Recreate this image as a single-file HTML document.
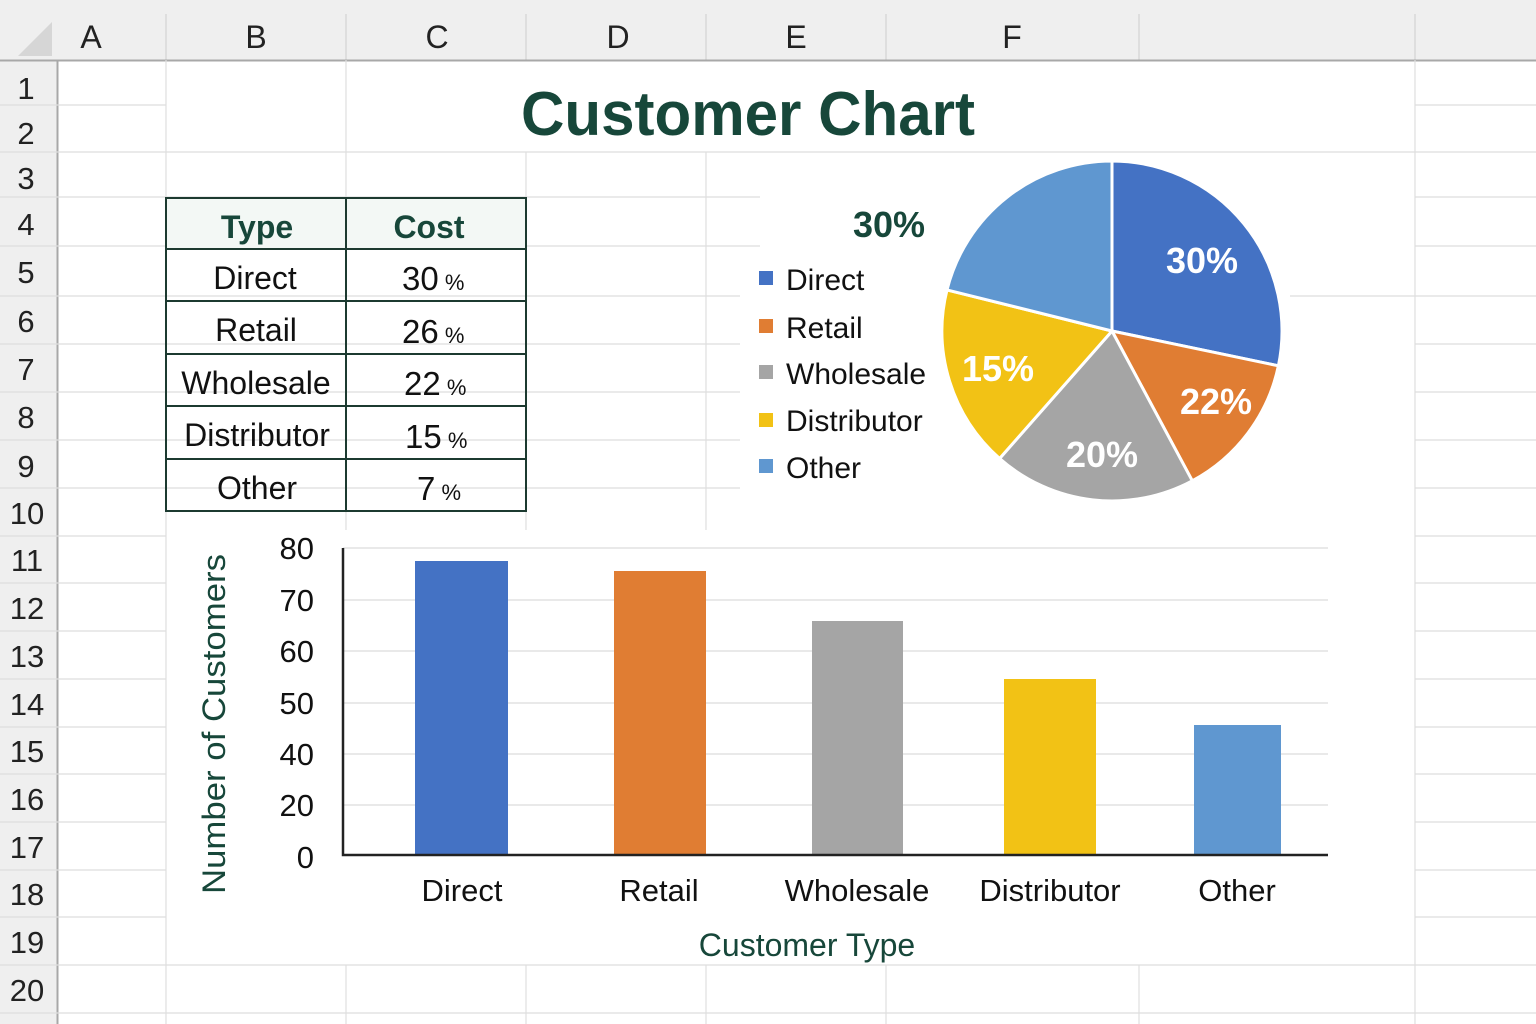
<!DOCTYPE html>
<html><head><meta charset="utf-8"><style>
html,body{margin:0;padding:0;background:#fff;}
svg{display:block;font-family:"Liberation Sans",sans-serif;}
</style></head><body>
<svg width="1536" height="1024" viewBox="0 0 1536 1024" xmlns="http://www.w3.org/2000/svg">
<rect width="1536" height="1024" fill="#fff"/>
<!-- headers -->
<rect x="0" y="0" width="1536" height="60" fill="#efefef"/>
<rect x="0" y="0" width="57" height="1024" fill="#efefef"/>
<polygon points="52,22 52,56 18,56" fill="#d6d6d6"/>
<g stroke="#d4d4d4" stroke-width="1.3">
<line x1="166" y1="14" x2="166" y2="60"/><line x1="346" y1="14" x2="346" y2="60"/><line x1="526" y1="14" x2="526" y2="60"/><line x1="706" y1="14" x2="706" y2="60"/><line x1="886" y1="14" x2="886" y2="60"/><line x1="1139" y1="14" x2="1139" y2="60"/><line x1="1415" y1="14" x2="1415" y2="60"/>
</g>
<line x1="0" y1="60.5" x2="1536" y2="60.5" stroke="#a8a8a8" stroke-width="2"/>
<line x1="57.5" y1="60" x2="57.5" y2="1024" stroke="#a8a8a8" stroke-width="2"/>
<g font-size="32" fill="#222" text-anchor="middle">
<text x="91" y="48">A</text><text x="256" y="48">B</text><text x="437" y="48">C</text><text x="618" y="48">D</text><text x="796" y="48">E</text><text x="1012" y="48">F</text>
</g>
<!-- grid -->
<g stroke="#dedede" stroke-width="1.2">
<line x1="166" y1="60" x2="166" y2="1024"/><line x1="346" y1="60" x2="346" y2="530"/><line x1="526" y1="152" x2="526" y2="530"/><line x1="706" y1="152" x2="706" y2="530"/><line x1="1415" y1="60" x2="1415" y2="1024"/>
<line x1="346" y1="965" x2="346" y2="1024"/><line x1="526" y1="965" x2="526" y2="1024"/><line x1="706" y1="965" x2="706" y2="1024"/><line x1="886" y1="965" x2="886" y2="1024"/><line x1="1139" y1="965" x2="1139" y2="1024"/>
</g>
<g stroke="#dedede" stroke-width="1.2">
<line x1="0" y1="105" x2="166" y2="105"/><line x1="1415" y1="105" x2="1536" y2="105"/>
<line x1="0" y1="152" x2="1536" y2="152"/>
<line x1="0" y1="197" x2="760" y2="197"/><line x1="1415" y1="197" x2="1536" y2="197"/>
<line x1="0" y1="246" x2="760" y2="246"/><line x1="1415" y1="246" x2="1536" y2="246"/>
<line x1="0" y1="296" x2="740" y2="296"/><line x1="1290" y1="296" x2="1536" y2="296"/>
<line x1="0" y1="344" x2="740" y2="344"/><line x1="1415" y1="344" x2="1536" y2="344"/>
<line x1="0" y1="392" x2="740" y2="392"/><line x1="1415" y1="392" x2="1536" y2="392"/>
<line x1="0" y1="440" x2="740" y2="440"/><line x1="1415" y1="440" x2="1536" y2="440"/>
<line x1="0" y1="488" x2="740" y2="488"/><line x1="1415" y1="488" x2="1536" y2="488"/>
<line x1="0" y1="536" x2="166" y2="536"/><line x1="1415" y1="536" x2="1536" y2="536"/>
<line x1="0" y1="583" x2="166" y2="583"/><line x1="1415" y1="583" x2="1536" y2="583"/>
<line x1="0" y1="631" x2="166" y2="631"/><line x1="1415" y1="631" x2="1536" y2="631"/>
<line x1="0" y1="679" x2="166" y2="679"/><line x1="1415" y1="679" x2="1536" y2="679"/>
<line x1="0" y1="727" x2="166" y2="727"/><line x1="1415" y1="727" x2="1536" y2="727"/>
<line x1="0" y1="774" x2="166" y2="774"/><line x1="1415" y1="774" x2="1536" y2="774"/>
<line x1="0" y1="822" x2="166" y2="822"/><line x1="1415" y1="822" x2="1536" y2="822"/>
<line x1="0" y1="870" x2="166" y2="870"/><line x1="1415" y1="870" x2="1536" y2="870"/>
<line x1="0" y1="917" x2="166" y2="917"/><line x1="1415" y1="917" x2="1536" y2="917"/>
<line x1="0" y1="965" x2="1536" y2="965"/>
<line x1="0" y1="1013" x2="1536" y2="1013"/>
</g>
<g font-size="31" fill="#222" text-anchor="middle">
<text x="26" y="99">1</text><text x="26" y="144">2</text><text x="26" y="189">3</text><text x="26" y="235">4</text><text x="26" y="283">5</text><text x="26" y="332">6</text><text x="26" y="380">7</text><text x="26" y="428">8</text><text x="26" y="477">9</text><text x="27" y="524">10</text><text x="27" y="571">11</text><text x="27" y="619">12</text><text x="27" y="667">13</text><text x="27" y="715">14</text><text x="27" y="762">15</text><text x="27" y="810">16</text><text x="27" y="858">17</text><text x="27" y="905">18</text><text x="27" y="953">19</text><text x="27" y="1001">20</text>
</g>
<!-- title -->
<text x="748" y="135" font-size="62" font-weight="bold" fill="#17473a" text-anchor="middle" textLength="454" lengthAdjust="spacingAndGlyphs">Customer Chart</text>
<!-- table -->
<rect x="166" y="198" width="360" height="51" fill="#f3f8f5"/>
<g stroke="#1c3a30" stroke-width="2" fill="none">
<rect x="166" y="198" width="360" height="313"/>
<line x1="346" y1="198" x2="346" y2="511"/>
<line x1="166" y1="249" x2="526" y2="249"/><line x1="166" y1="301" x2="526" y2="301"/><line x1="166" y1="354" x2="526" y2="354"/><line x1="166" y1="406" x2="526" y2="406"/><line x1="166" y1="459" x2="526" y2="459"/>
</g>
<g font-size="32" font-weight="bold" fill="#17473a" text-anchor="middle">
<text x="257" y="238">Type</text><text x="429" y="238">Cost</text>
</g>
<g font-size="32" fill="#111" text-anchor="middle">
<text x="255" y="289">Direct</text><text x="256" y="341">Retail</text><text x="256" y="394">Wholesale</text><text x="257" y="446">Distributor</text><text x="257" y="499">Other</text>
</g>
<g font-size="33" fill="#111">
<text x="402" y="290">30<tspan font-size="22"> %</tspan></text>
<text x="402" y="343">26<tspan font-size="22"> %</tspan></text>
<text x="404" y="395">22<tspan font-size="22"> %</tspan></text>
<text x="405" y="448">15<tspan font-size="22"> %</tspan></text>
<text x="417" y="500">7<tspan font-size="22"> %</tspan></text>
</g>
<!-- pie -->
<g stroke="#fff" stroke-width="3" stroke-linejoin="round">
<path d="M1112,331 L1112,161 A170,170 0 0 1 1278.4,365.8 Z" fill="#4472c4"/>
<path d="M1112,331 L1278.4,365.8 A170,170 0 0 1 1192.3,480.8 Z" fill="#e07d33"/>
<path d="M1112,331 L1192.3,480.8 A170,170 0 0 1 999.6,458.5 Z" fill="#a5a5a5"/>
<path d="M1112,331 L999.6,458.5 A170,170 0 0 1 947,289.9 Z" fill="#f2c215"/>
<path d="M1112,331 L947,289.9 A170,170 0 0 1 1112,161 Z" fill="#5f97d0"/>
</g>
<g font-size="36" font-weight="bold" fill="#fff" text-anchor="middle">
<text x="1202" y="273">30%</text><text x="1216" y="414">22%</text><text x="1102" y="467">20%</text><text x="998" y="381">15%</text>
</g>
<text x="889" y="237" font-size="36" font-weight="bold" fill="#17473a" text-anchor="middle">30%</text>
<rect x="759" y="271" width="14" height="14" fill="#4472c4"/>
<rect x="759" y="319" width="14" height="14" fill="#e07d33"/>
<rect x="759" y="365" width="14" height="14" fill="#a5a5a5"/>
<rect x="759" y="413" width="14" height="14" fill="#f2c215"/>
<rect x="759" y="459" width="14" height="14" fill="#5f97d0"/>
<g font-size="30" fill="#111">
<text x="786" y="290">Direct</text><text x="786" y="338">Retail</text><text x="786" y="384">Wholesale</text><text x="786" y="431">Distributor</text><text x="786" y="478">Other</text>
</g>
<!-- bar chart -->
<g stroke="#dcdcdc" stroke-width="1.3">
<line x1="343" y1="548" x2="1328" y2="548"/><line x1="343" y1="600" x2="1328" y2="600"/><line x1="343" y1="651" x2="1328" y2="651"/><line x1="343" y1="703" x2="1328" y2="703"/><line x1="343" y1="754" x2="1328" y2="754"/><line x1="343" y1="805" x2="1328" y2="805"/>
</g>
<rect x="415" y="561" width="93" height="294" fill="#4472c4"/>
<rect x="614" y="571" width="92" height="284" fill="#e07d33"/>
<rect x="812" y="621" width="91" height="234" fill="#a5a5a5"/>
<rect x="1004" y="679" width="92" height="176" fill="#f2c215"/>
<rect x="1194" y="725" width="87" height="130" fill="#5f97d0"/>
<path d="M343,548 L343,855 L1328,855" stroke="#222" stroke-width="2.5" fill="none"/>
<g font-size="31" fill="#111" text-anchor="end">
<text x="314" y="559">80</text><text x="314" y="611">70</text><text x="314" y="662">60</text><text x="314" y="714">50</text><text x="314" y="765">40</text><text x="314" y="816">20</text><text x="314" y="868">0</text>
</g>
<g font-size="31" fill="#111" text-anchor="middle">
<text x="462" y="901">Direct</text><text x="659" y="901">Retail</text><text x="857" y="901">Wholesale</text><text x="1050" y="901">Distributor</text><text x="1237" y="901">Other</text>
</g>
<text x="807" y="956" font-size="32" fill="#17473a" text-anchor="middle">Customer Type</text>
<text transform="translate(225,724) rotate(-90)" font-size="32" fill="#17473a" text-anchor="middle" textLength="340" lengthAdjust="spacingAndGlyphs">Number of Customers</text>
</svg>
</body></html>
